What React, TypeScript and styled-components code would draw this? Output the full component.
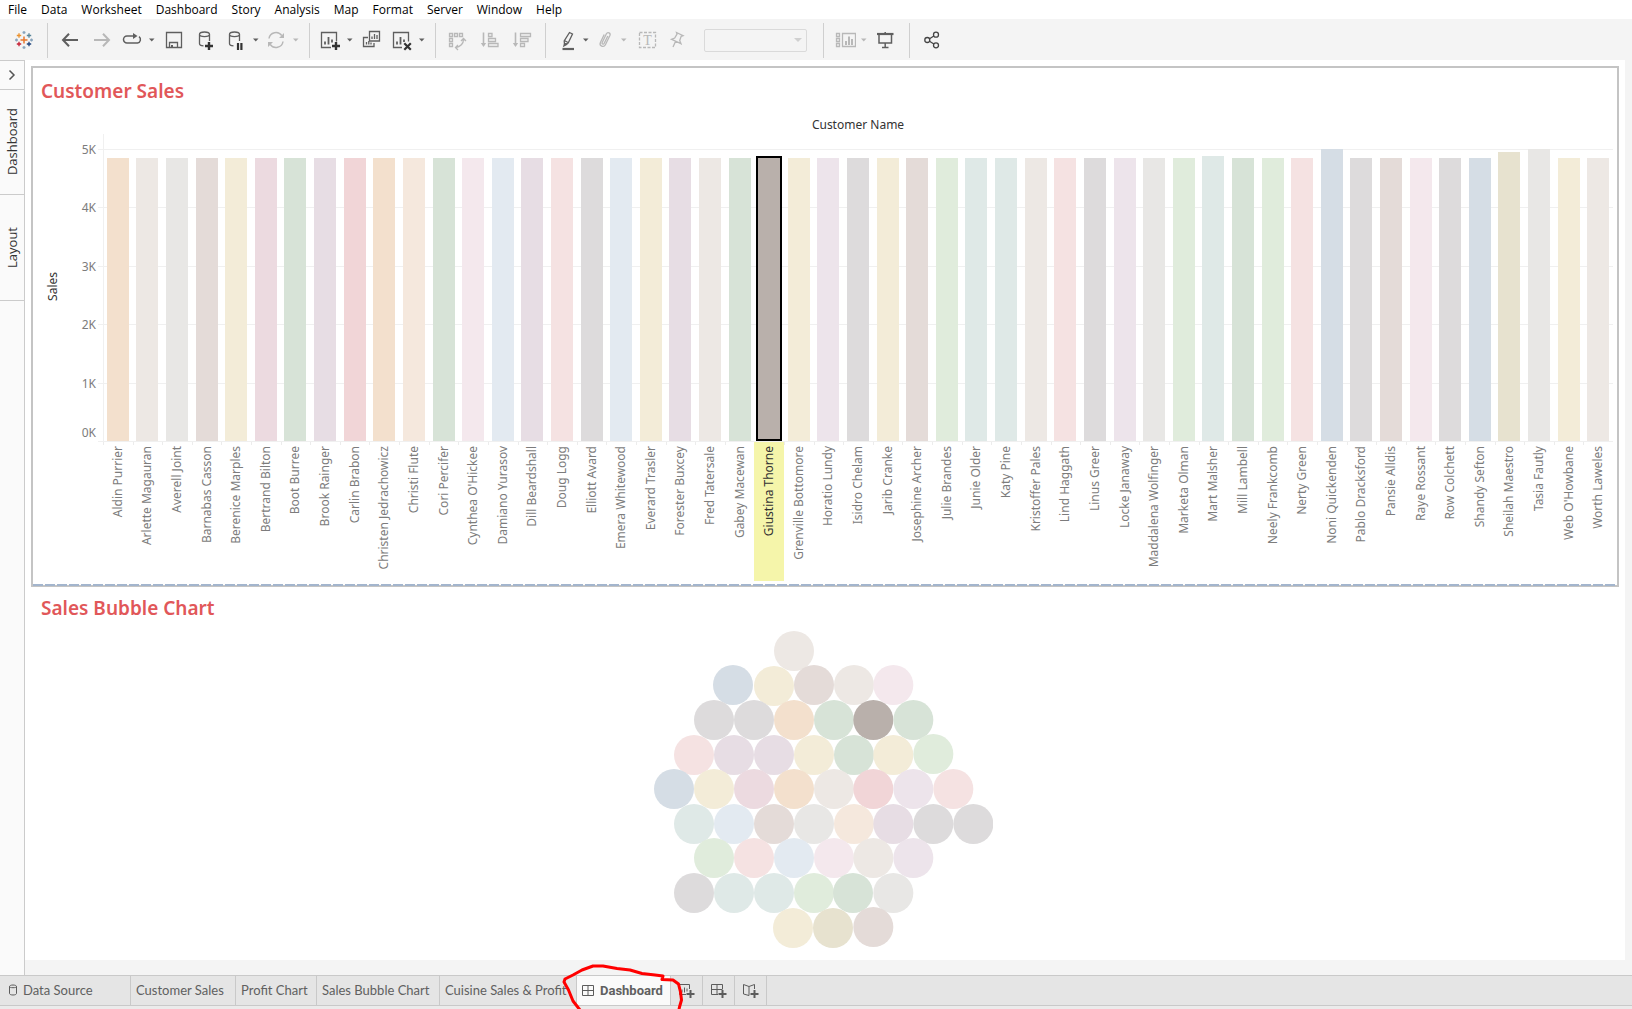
import React from "react";
import styled, { createGlobalStyle } from "styled-components";

const uiFont = `"Open Sans", "Noto Sans", sans-serif`;
const vizFont = `"Noto Sans", "Open Sans", sans-serif`;

const GlobalStyle = createGlobalStyle`
  *, *::before, *::after { box-sizing: border-box; }
  body { margin: 0; background: #ffffff; font-family: ${vizFont}; }
  button { font: inherit; color: inherit; background: none; border: 0; padding: 0; margin: 0; }
`;

/* ---------- shell ---------- */

const Page = styled.div`
  display: flex;
  flex-direction: column;
  min-height: 100vh;
`;

const MenuBar = styled.nav`
  display: flex;
  gap: 14px;
  height: 19px;
  padding-left: 8px;
  background: #ffffff;
`;

const MenuItem = styled.button`
  font-family: ${uiFont};
  font-size: 12px;
  line-height: 19px;
  color: #000000;
  white-space: nowrap;
`;

const Toolbar = styled.div`
  display: flex;
  height: 41px;
  padding: 4px 0 2px 7px;
  background: #f4f4f4;
`;

const Separator = styled.span`
  flex: none;
  width: 1px;
  height: 35px;
  margin: 0 6px 0 7px;
  background: #cfcfcf;
`;

const Tool = styled.button<{ $w: number; $off?: boolean }>`
  flex: none;
  display: flex;
  align-items: center;
  justify-content: center;
  width: ${(p) => p.$w}px;
  height: 34px;
  color: ${(p) => (p.$off ? "#b8b8b8" : "#5f5f5f")};
`;

const Glyph = styled.svg<{ $stroke?: number }>`
  display: block;
  flex: none;
  width: 24px;
  height: 24px;
  fill: none;
  stroke: currentColor;
  stroke-width: ${(p) => p.$stroke ?? 1.3};
`;

const SelectBox = styled.label`
  position: relative;
  display: block;
`;

const FitSelect = styled.select`
  appearance: none;
  width: 103px;
  height: 23px;
  margin: 6px 9px 0 12px;
  border: 1px solid #d0d0d0;
  border-radius: 2px;
  background: #f4f4f4;
`;

const SelectArrow = styled.span`
  position: absolute;
  right: 14px;
  top: 15px;
  border: solid transparent;
  border-width: 4px 4px 0;
  border-top-color: #d0d0d0;
  pointer-events: none;
`;

const Main = styled.div`
  flex: 1;
  display: flex;
`;

const Rail = styled.aside`
  flex: none;
  display: flex;
  flex-direction: column;
  width: 25px;
  border: solid #cbcbcb;
  border-width: 1px 1px 0 0;
  background: #fafafa;
`;

const RailButton = styled.button<{ $h: number }>`
  display: flex;
  align-items: center;
  justify-content: center;
  height: ${(p) => p.$h}px;
  border-bottom: 1px solid #cbcbcb;
  color: #333333;
  font-family: ${uiFont};
`;

const SideText = styled.span`
  writing-mode: vertical-rl;
  transform: rotate(180deg);
  font-size: 13px;
  line-height: 16px;
`;

const Workspace = styled.main`
  flex: 1;
  min-width: 0;
  display: flex;
  padding: 0 7px 15px 0;
  background: #f4f4f4;
`;

const Sheet = styled.div`
  flex: 1;
  min-width: 0;
  display: flex;
  flex-direction: column;
  padding: 6px;
  background: #ffffff;
`;

/* ---------- bar chart ---------- */

const SelectedPanel = styled.section`
  padding: 0 4px 4px 0;
  border: 2px solid #c4c4c4;
`;

const Panel = styled.section`
  padding: 0 6px 0 2px;
`;

const PanelTitle = styled.h2`
  margin: 0;
  padding-left: 8px;
  font-family: ${vizFont};
  font-size: 19px;
  line-height: 46px;
  font-weight: 600;
  color: #e15759;
`;

const BarGrid = styled.div`
  display: grid;
  grid-template-columns: 40px 30px minmax(0, 1fr);
  grid-template-rows: 20px 308px 139px;
`;

const FieldName = styled.div`
  grid-column: 3;
  text-align: center;
  font-size: 12px;
  line-height: 22px;
  color: #333333;
`;

const AxisTitle = styled.div`
  grid-column: 1;
  grid-row: 2;
  display: flex;
  align-items: center;
  justify-content: center;
  padding-bottom: 4px;
  color: #333333;

  ${SideText} { font-size: 12px; }
`;

const AxisLabels = styled.div`
  grid-column: 2;
  grid-row: 2;
  display: flex;
  flex-direction: column;
  padding: 15px 7px 1px 0;
`;

const AxisStep = styled.div`
  flex: 1;
  display: flex;
  flex-direction: column;
  justify-content: space-between;
  text-align: right;
  font-size: 12px;
  line-height: 16px;
  color: #7c7c7c;

  > span:first-child { margin-top: -7px; }
`;

const GridLines = styled.div`
  grid-column: 3;
  grid-row: 2;
  display: flex;
  flex-direction: column;
  margin-left: -5px;
  padding-top: 15px;
  border-bottom: 1px solid #f0f0f0;
`;

const GridLine = styled.div`
  flex: 1;
  border-top: 1px solid #f0f0f0;
`;

const Bars = styled.div`
  grid-column: 3;
  grid-row: 2;
  display: flex;
  align-items: flex-end;
  background: linear-gradient(#f0f0f0, #f0f0f0) no-repeat 0 0 / 1px 100%;
  margin-bottom: 1px;
`;

const BarCell = styled.div`
  flex: 1 1 0;
  min-width: 0;
  height: 100%;
  display: flex;
  align-items: flex-end;
  justify-content: center;
`;

const Bar = styled.div<{ $color: string; $selected: boolean }>`
  flex: none;
  width: ${(p) => (p.$selected ? 26 : 22)}px;
  background: ${(p) => p.$color};
  border: ${(p) => (p.$selected ? "2px solid #000000" : "0")};
`;

const Names = styled.div`
  grid-column: 3;
  grid-row: 3;
  display: flex;
`;

const NameCell = styled.div<{ $selected: boolean }>`
  flex: 1 1 0;
  min-width: 0;
  display: flex;
  justify-content: center;
  align-items: flex-start;
  padding-top: 4px;
  white-space: nowrap;
  color: ${(p) => (p.$selected ? "#333333" : "#7c7c7c")};
  background: ${(p) =>
    p.$selected
      ? "#f5f5aa"
      : "linear-gradient(#ececec, #ececec) no-repeat 0 0 / 1px 3px"};

  ${SideText} { font-size: 12px; }
`;

const DropEdge = styled.div`
  height: 2px;
  margin: -3px 2px -1px;
  background: repeating-linear-gradient(90deg, #a3b5cd 0 10px, transparent 10px 12px);
`;

/* ---------- bubbles ---------- */

const BubbleArea = styled.div`
  display: flex;
  justify-content: center;
`;

const BubbleSvg = styled.svg`
  display: block;
  width: 339px;
  height: 317px;
`;

/* ---------- sheet tabs ---------- */

const TabStrip = styled.footer`
  position: relative;
  display: flex;
  height: 31px;
  border: solid #c9c9c9;
  border-width: 1px 0;
  background: #e5e5e5;
`;

const Tab = styled.button<{ $w: number; $active?: boolean }>`
  flex: none;
  display: flex;
  align-items: center;
  gap: 6px;
  width: ${(p) => p.$w}px;
  padding-left: 5px;
  border-right: 1px solid #c9c9c9;
  font-family: ${(p) => (p.$active ? "Roboto" : "Lato")}, "Liberation Sans", sans-serif;
  font-size: 13px;
  line-height: 29px;
  font-weight: ${(p) => (p.$active ? 700 : 400)};
  color: #606060;
  background: ${(p) => (p.$active ? "#fafafa" : "transparent")};
  white-space: nowrap;
`;

const TabGlyph = styled.svg<{ $w: number }>`
  flex: none;
  width: ${(p) => p.$w}px;
  height: 17px;
  fill: none;
  stroke: #5c5c5c;
`;

const Scribble = styled.svg`
  position: absolute;
  left: 560px;
  bottom: -4px;
  width: 130px;
  height: 48px;
  fill: none;
  stroke: #ff0000;
  stroke-width: 3;
  stroke-linejoin: round;
  pointer-events: none;
`;

const StatusBar = styled.div`
  height: 3px;
  background: #ebebeb;
`;

/* ---------- data ---------- */

const C = {
  orange: "#f3e0cd",
  taupe: "#ede8e4",
  ash: "#e8e7e5",
  brown: "#e4dbd8",
  yellow: "#f3ecd8",
  mauve: "#ecdae0",
  green: "#d7e3d7",
  lilac: "#e7dde4",
  red: "#f1d5d7",
  peach: "#f5e8dd",
  pink: "#f4e8ed",
  sky: "#e3eaf1",
  rose: "#f5e2e2",
  grey: "#dddbdc",
  mint: "#dfe9e7",
  lime: "#e0ecdc",
  lavender: "#ede4eb",
  slate: "#d5dde5",
  olive: "#e7e2cf",
  picked: "#b9b0ab",
};

type Hue = keyof typeof C;

const AXIS_MAX = 5.257;

const customers: [string, Hue, number?][] = [
  ["Aldin Purrier", "orange"],
  ["Arlette Magauran", "taupe"],
  ["Averell Joint", "ash"],
  ["Barnabas Casson", "brown"],
  ["Berenice Marples", "yellow"],
  ["Bertrand Bilton", "mauve"],
  ["Boot Burree", "green"],
  ["Brook Rainger", "lilac"],
  ["Carlin Brabon", "red"],
  ["Christen Jedrachowicz", "orange"],
  ["Christi Flute", "peach"],
  ["Cori Percifer", "green"],
  ["Cynthea O'Hickee", "pink"],
  ["Damiano Yurasov", "sky"],
  ["Dill Beardshall", "lilac"],
  ["Doug Logg", "rose"],
  ["Elliott Avard", "grey"],
  ["Emera Whitewood", "sky"],
  ["Everard Trasler", "yellow"],
  ["Forester Buxcey", "lilac"],
  ["Fred Tatersale", "taupe"],
  ["Gabey Macewan", "green"],
  ["Giustina Thorne", "picked", 4.88],
  ["Grenville Bottomore", "yellow"],
  ["Horatio Lundy", "lavender"],
  ["Isidro Chelam", "grey"],
  ["Jarib Cranke", "yellow"],
  ["Josephine Archer", "brown"],
  ["Julie Brandes", "lime"],
  ["Junie Older", "mint"],
  ["Katy Pine", "mint"],
  ["Kristoffer Pales", "taupe"],
  ["Lind Haggath", "rose"],
  ["Linus Greer", "grey"],
  ["Locke Janaway", "lavender"],
  ["Maddalena Wolfinger", "ash"],
  ["Marketa Olman", "lime"],
  ["Mart Malsher", "mint", 4.88],
  ["Mill Lambell", "green"],
  ["Neely Frankcomb", "lime"],
  ["Nerty Green", "rose"],
  ["Noni Quickenden", "slate", 5],
  ["Pablo Dracksford", "grey"],
  ["Pansie Alldis", "brown"],
  ["Raye Rossant", "pink"],
  ["Row Colchett", "grey"],
  ["Shandy Sefton", "slate"],
  ["Sheilah Maestro", "olive", 4.95],
  ["Tasia Fautly", "ash", 5],
  ["Web O'Howbane", "yellow"],
  ["Worth Laweles", "taupe"],
];

const bubbles: [number, number, Hue][] = [
  [465, 93, "taupe"],
  [282, 195, "slate"], [405, 198, "yellow"], [525, 195, "brown"], [645, 195, "taupe"], [763, 195, "pink"],
  [225, 300, "grey"], [345, 300, "grey"], [465, 300, "orange"], [585, 300, "green"], [703, 300, "picked"], [823, 300, "green"],
  [165, 405, "rose"], [285, 405, "lilac"], [405, 405, "lilac"], [525, 405, "yellow"], [645, 405, "green"], [763, 405, "yellow"], [883, 402, "lime"],
  [105, 507, "slate"], [225, 507, "yellow"], [345, 507, "mauve"], [465, 507, "orange"], [585, 507, "taupe"], [703, 507, "red"], [823, 507, "lavender"], [943, 507, "rose"],
  [165, 612, "mint"], [285, 612, "sky"], [405, 612, "brown"], [525, 612, "ash"], [645, 612, "peach"], [763, 612, "lilac"], [883, 612, "grey"], [1003, 612, "grey"],
  [225, 714, "lime"], [345, 714, "rose"], [465, 714, "sky"], [585, 714, "pink"], [703, 714, "taupe"], [823, 714, "lavender"],
  [165, 819, "grey"], [285, 819, "mint"], [405, 819, "mint"], [525, 819, "lime"], [642, 819, "green"], [763, 819, "ash"],
  [462, 924, "yellow"], [582, 924, "olive"], [703, 921, "brown"],
];

const menus = ["File", "Data", "Worksheet", "Dashboard", "Story", "Analysis", "Map", "Format", "Server", "Window", "Help"];

/* ---------- icons ---------- */

const plus = (x: number, y: number, r: number) => `M${x - r} ${y}h${2 * r}M${x} ${y - r}v${2 * r}`;

const Logo = () => (
  <Glyph viewBox="0 0 24 24">
    <path d={plus(12, 12, 3.5)} stroke="#e8762d" strokeWidth="1.5" />
    <path d={plus(7, 7.5, 2.2)} stroke="#eb912c" />
    <path d={plus(17, 7.5, 2.2)} stroke="#59879b" />
    <path d={plus(7, 16, 2.2)} stroke="#c72035" />
    <path d={plus(17, 16, 2.2)} stroke="#1f447e" />
    <path d={plus(12, 4.5, 1.5) + plus(12, 19.5, 1.5) + plus(4.5, 12, 1.5) + plus(19.5, 12, 1.5)} stroke="#8aa5bd" />
  </Glyph>
);

const Back = () => (
  <Glyph viewBox="0 0 24 24" $stroke={2}>
    <path d="M20 12H5.5M11 5.7L5 12l6 6.3" />
  </Glyph>
);

const Forward = () => (
  <Glyph viewBox="0 0 24 24" $stroke={2}>
    <path d="M4 12h14.5M13 5.7l6 6.3-6 6.3" />
  </Glyph>
);

const Replay = () => (
  <Glyph viewBox="0 0 24 24">
    <path d="M14 8H7a3.5 3.5 0 0 0 0 7h10.5a3.5 3.5 0 0 0 1.5-6.3" strokeWidth="1.5" />
    <path d="M13 5l4.5 3-4.5 3z" fill="currentColor" stroke="none" />
  </Glyph>
);

const Save = () => (
  <Glyph viewBox="0 0 24 24">
    <path d="M4.5 4.5h15v15h-15zM7.5 19.5v-5h8v5" />
    <path d="M9 17h2v2.5H9z" fill="currentColor" stroke="none" />
  </Glyph>
);

const cylinder = "M16.5 13V6.3M16.5 6.3c0 1.3-2.2 2.3-5 2.3s-5-1-5-2.3 2.2-2.3 5-2.3 5 1 5 2.3zM6.5 6.3v9.4c0 1.2 1.6 2 4 2.2";

const AddData = () => (
  <Glyph viewBox="0 0 24 24">
    <path d={cylinder} />
    <path d={plus(16, 18, 4)} stroke="#333333" strokeWidth="2.4" />
  </Glyph>
);

const PauseData = () => (
  <Glyph viewBox="0 0 24 24">
    <path d={cylinder} />
    <path d="M15 15v7M18.4 15v7" stroke="#333333" strokeWidth="2.2" />
  </Glyph>
);

const Refresh = () => (
  <Glyph viewBox="0 0 24 24">
    <path d="M5 10.5a7 7 0 0 1 12.8-2.8M19 13.5A7 7 0 0 1 6.2 16.3" strokeWidth="1.5" />
    <path d="M20 5v5h-5zM4 19v-5h5z" fill="currentColor" stroke="none" />
  </Glyph>
);

const NewSheet = () => (
  <Glyph viewBox="0 0 24 24">
    <path d="M18.5 13.5v-9h-15v15h9.5" />
    <path d="M7 13.5v3M10.5 9v7.5M14 11.5v3" strokeWidth="1.8" />
    <path d={plus(18, 18, 4)} stroke="#333333" strokeWidth="2.4" />
  </Glyph>
);

const Duplicate = () => (
  <Glyph viewBox="0 0 24 24">
    <path d="M10.5 3.5h10v9.5h-10zM9 9.5H4.5v9h10.5V15" />
    <path d="M13 8.5v2.5M15.5 6v5M18 7v4M7.5 14v2.5M9.8 13v3.5M12 14.5v2" />
  </Glyph>
);

const ClearSheet = () => (
  <Glyph viewBox="0 0 24 24">
    <path d="M19.5 13.5v-9h-15v15H13" />
    <path d="M8 13.5v3M11.5 9v7.5M15 11.5v2.5" strokeWidth="1.8" />
    <path d="M15.3 15.3l6.5 6.5M21.8 15.3l-6.5 6.5" stroke="#333333" strokeWidth="2.2" />
  </Glyph>
);

const Swap = () => (
  <Glyph viewBox="0 0 24 24">
    <path d="M3.5 5.5h3v3h-3zM8.5 5.5h3v3h-3zM13.5 5.5h3v3h-3zM3.5 10.5h3v3h-3zM3.5 15.5h3v3h-3z" />
    <path d="M17.5 11.5c0 4-3 7.5-8 8M15 13l2.5-2.5L20 13M12 17l-2.5 2.5L12 22" />
  </Glyph>
);

const SortAsc = () => (
  <Glyph viewBox="0 0 24 24">
    <path d="M5.5 4.5V17" strokeWidth="1.6" />
    <path d="M2.8 15h5.4l-2.7 4z" fill="currentColor" stroke="none" />
    <path d="M10.5 5.5h3.5v3h-3.5zM10.5 10.5h7v3h-7zM10.5 15.5h9.5v3h-9.5z" />
  </Glyph>
);

const SortDesc = () => (
  <Glyph viewBox="0 0 24 24">
    <path d="M5.5 4.5V17" strokeWidth="1.6" />
    <path d="M2.8 15h5.4l-2.7 4z" fill="currentColor" stroke="none" />
    <path d="M10.5 5.5h10v3h-10zM10.5 10.5h7.5v3h-7.5zM10.5 15.5h4v3h-4z" />
  </Glyph>
);

const Highlighter = () => (
  <Glyph viewBox="0 0 24 24">
    <path d="M15.5 4.5l3 1.5-4.3 9-3.7 1.5-.3-3.5zM10.8 12.8l3.2 1.7" />
    <path d="M10 17.8l.8-2.3 1.7.9z" fill="currentColor" />
    <path d="M8.5 21H20" strokeWidth="2.2" />
  </Glyph>
);

const Clip = () => (
  <Glyph viewBox="0 0 24 24">
    <path d="M14.8 8l-3.6 7.3c-.8 1.5-2.7.7-2-.9l4.2-8.6c1.2-2.3 4.6-.8 3.5 1.7l-4.5 9.2c-1.7 3.3-6.5 1.2-5-2.3l3.8-7.9" />
  </Glyph>
);

const TextMark = () => (
  <Glyph viewBox="0 0 24 24">
    <rect x="5.5" y="4.5" width="16" height="15" strokeDasharray="3 1.5" />
    <text x="13.5" y="17" textAnchor="middle" fontFamily="Liberation Serif, serif" fontSize="14" fill="currentColor" stroke="none">T</text>
  </Glyph>
);

const Pin = () => (
  <Glyph viewBox="0 0 24 24">
    <path d="M11.5 4.5l6.5 3.2-1.8.6-1.5 4.2 1.3 3.2-9.5-4.3 3.2-1.3 2.3-4zM10.5 13.5L8 19" />
  </Glyph>
);

const ShowMe = () => (
  <Glyph viewBox="0 0 24 24">
    <path d="M4.5 5.5h3v3h-3zM4.5 10.5h3v3h-3zM4.5 15.5h3v3h-3zM10.5 5.5h13v13h-13z" />
    <path d="M14 13v4M17 8.5V17M20 11v6" strokeWidth="2" />
  </Glyph>
);

const Present = () => (
  <Glyph viewBox="0 0 24 24">
    <path d="M3 6h16.5" strokeWidth="2.2" />
    <path d="M5 6.5v8.5h12.5V6.5M11.2 4v2M11.2 15v4.5M8 19.5h6.5" strokeWidth="1.5" />
  </Glyph>
);

const ShareTool = styled(Tool)`
  color: #444444;
`;

const Share = () => (
  <Glyph viewBox="0 0 24 24">
    <circle cx="7.3" cy="12" r="2.5" />
    <circle cx="16" cy="6.7" r="2.5" />
    <circle cx="16" cy="17.3" r="2.5" />
    <path d="M9.5 10.7l4.4-2.7M9.5 13.3l4.4 2.7" />
  </Glyph>
);

const Caret = ({ off }: { off?: boolean }) => (
  <Tool $w={12} $off={off}>
    <svg width="6" height="4" viewBox="0 0 6 4">
      <path d="M0 0.5h5.5L2.75 3.5z" fill="currentColor" />
    </svg>
  </Tool>
);

const tabPlus = <path d="M14.5 8v8M10.5 12h8" strokeWidth="2" />;

/* ---------- app ---------- */

export default function App() {
  return (
    <Page>
      <GlobalStyle />
      <MenuBar>
        {menus.map((m) => (
          <MenuItem key={m}>{m}</MenuItem>
        ))}
      </MenuBar>

      <Toolbar>
        <Tool $w={33}><Logo /></Tool>
        <Separator />
        <Tool $w={32}><Back /></Tool>
        <Tool $w={32} $off><Forward /></Tool>
        <Tool $w={28}><Replay /></Tool>
        <Caret />
        <Tool $w={32}><Save /></Tool>
        <Tool $w={30}><AddData /></Tool>
        <Tool $w={30}><PauseData /></Tool>
        <Caret />
        <Tool $w={28} $off><Refresh /></Tool>
        <Caret off />
        <Separator />
        <Tool $w={28}><NewSheet /></Tool>
        <Caret />
        <Tool $w={30}><Duplicate /></Tool>
        <Tool $w={30}><ClearSheet /></Tool>
        <Caret />
        <Separator />
        <Tool $w={32} $off><Swap /></Tool>
        <Tool $w={32} $off><SortAsc /></Tool>
        <Tool $w={32} $off><SortDesc /></Tool>
        <Separator />
        <Tool $w={28}><Highlighter /></Tool>
        <Caret />
        <Tool $w={26} $off><Clip /></Tool>
        <Caret off />
        <Tool $w={32} $off><TextMark /></Tool>
        <Tool $w={30} $off><Pin /></Tool>
        <SelectBox>
          <FitSelect disabled aria-label="Fit" />
          <SelectArrow />
        </SelectBox>
        <Separator />
        <Tool $w={28} $off><ShowMe /></Tool>
        <Caret off />
        <Tool $w={32}><Present /></Tool>
        <Separator />
        <ShareTool $w={32}><Share /></ShareTool>
      </Toolbar>

      <Main>
        <Rail>
          <RailButton $h={29} aria-label="Expand">
            <svg width="8" height="12" viewBox="0 0 8 12" fill="none" stroke="#555555" strokeWidth="1.5">
              <path d="M1.5 1.5L6 6l-4.5 4.5" />
            </svg>
          </RailButton>
          <RailButton $h={105}><SideText>Dashboard</SideText></RailButton>
          <RailButton $h={106}><SideText>Layout</SideText></RailButton>
        </Rail>

        <Workspace>
          <Sheet>
            <SelectedPanel>
              <PanelTitle>Customer Sales</PanelTitle>
              <BarGrid>
                <FieldName>Customer Name</FieldName>
                <AxisTitle><SideText>Sales</SideText></AxisTitle>
                <AxisLabels>
                  {["5K", "4K", "3K", "2K", "1K"].map((t) => (
                    <AxisStep key={t}>
                      <span>{t}</span>
                      {t === "1K" && <span>0K</span>}
                    </AxisStep>
                  ))}
                </AxisLabels>
                <GridLines>
                  {[5, 4, 3, 2, 1].map((n) => (
                    <GridLine key={n} />
                  ))}
                </GridLines>
                <Bars>
                  {customers.map(([name, hue, value = 4.85]) => (
                    <BarCell key={name}>
                      <Bar
                        $color={C[hue]}
                        $selected={hue === "picked"}
                        style={{ height: `${(value / AXIS_MAX) * 100}%` }}
                      />
                    </BarCell>
                  ))}
                </Bars>
                <Names>
                  {customers.map(([name, hue]) => (
                    <NameCell key={name} $selected={hue === "picked"}>
                      <SideText>{name}</SideText>
                    </NameCell>
                  ))}
                </Names>
              </BarGrid>
            </SelectedPanel>
            <DropEdge />

            <Panel>
              <PanelTitle>Sales Bubble Chart</PanelTitle>
              <BubbleArea>
                <BubbleSvg viewBox="45 33 1017 951">
                  {bubbles.map(([x, y, hue]) => (
                    <circle key={`${x}-${y}`} cx={x} cy={y} r={60} fill={C[hue]} />
                  ))}
                </BubbleSvg>
              </BubbleArea>
            </Panel>
          </Sheet>
        </Workspace>
      </Main>

      <TabStrip>
        <Tab $w={131}>
          <TabGlyph $w={12} viewBox="0 0 12 17">
            <path d="M4.5 4.5v7c0 .8 1.5 1.5 3.5 1.5s3.5-.7 3.5-1.5v-7M11.5 4.5c0 .8-1.5 1.2-3.5 1.2s-3.5-.4-3.5-1.2S6 3 8 3s3.5.7 3.5 1.5z" />
          </TabGlyph>
          Data Source
        </Tab>
        <Tab $w={105}>Customer Sales</Tab>
        <Tab $w={81}>Profit Chart</Tab>
        <Tab $w={123}>Sales Bubble Chart</Tab>
        <Tab $w={137}>Cuisine Sales &amp; Profit</Tab>
        <Tab $w={94} $active>
          <TabGlyph $w={12} viewBox="0 0 12 17">
            <path d="M.5 3.5h11v10H.5zM6 3.5v10M.5 8.5h11" />
          </TabGlyph>
          Dashboard
        </Tab>
        <Tab $w={32} aria-label="New Worksheet">
          <TabGlyph $w={20} viewBox="0 0 20 17">
            <path d="M13.5 7V2.5h-10v10H10M6 7.5v3M8.5 5.5v5M11 6.5v3" />
            {tabPlus}
          </TabGlyph>
        </Tab>
        <Tab $w={32} aria-label="New Dashboard">
          <TabGlyph $w={20} viewBox="0 0 20 17">
            <path d="M14.5 7V2.5h-11v10H10M9 2.5v10M3.5 7.5h11" />
            {tabPlus}
          </TabGlyph>
        </Tab>
        <Tab $w={32} aria-label="New Story">
          <TabGlyph $w={20} viewBox="0 0 20 17">
            <path d="M14.5 7V2.5L9 4.5l-5.5-2v9.5L9 13.5M9 4.5v9" />
            {tabPlus}
          </TabGlyph>
        </Tab>
        <Scribble viewBox="0 0 130 48">
          <path d="M20 49L13 40 8.5 29 4 21l1-3 8-4 9-5 11-4h10l14 2.5 13 1.5 12 3.5 13 1.5 8 1-1 3.5 11 .5 5.5 4 2 8 1 8-2 7-1 5" />
        </Scribble>
      </TabStrip>
      <StatusBar />
    </Page>
  );
}
